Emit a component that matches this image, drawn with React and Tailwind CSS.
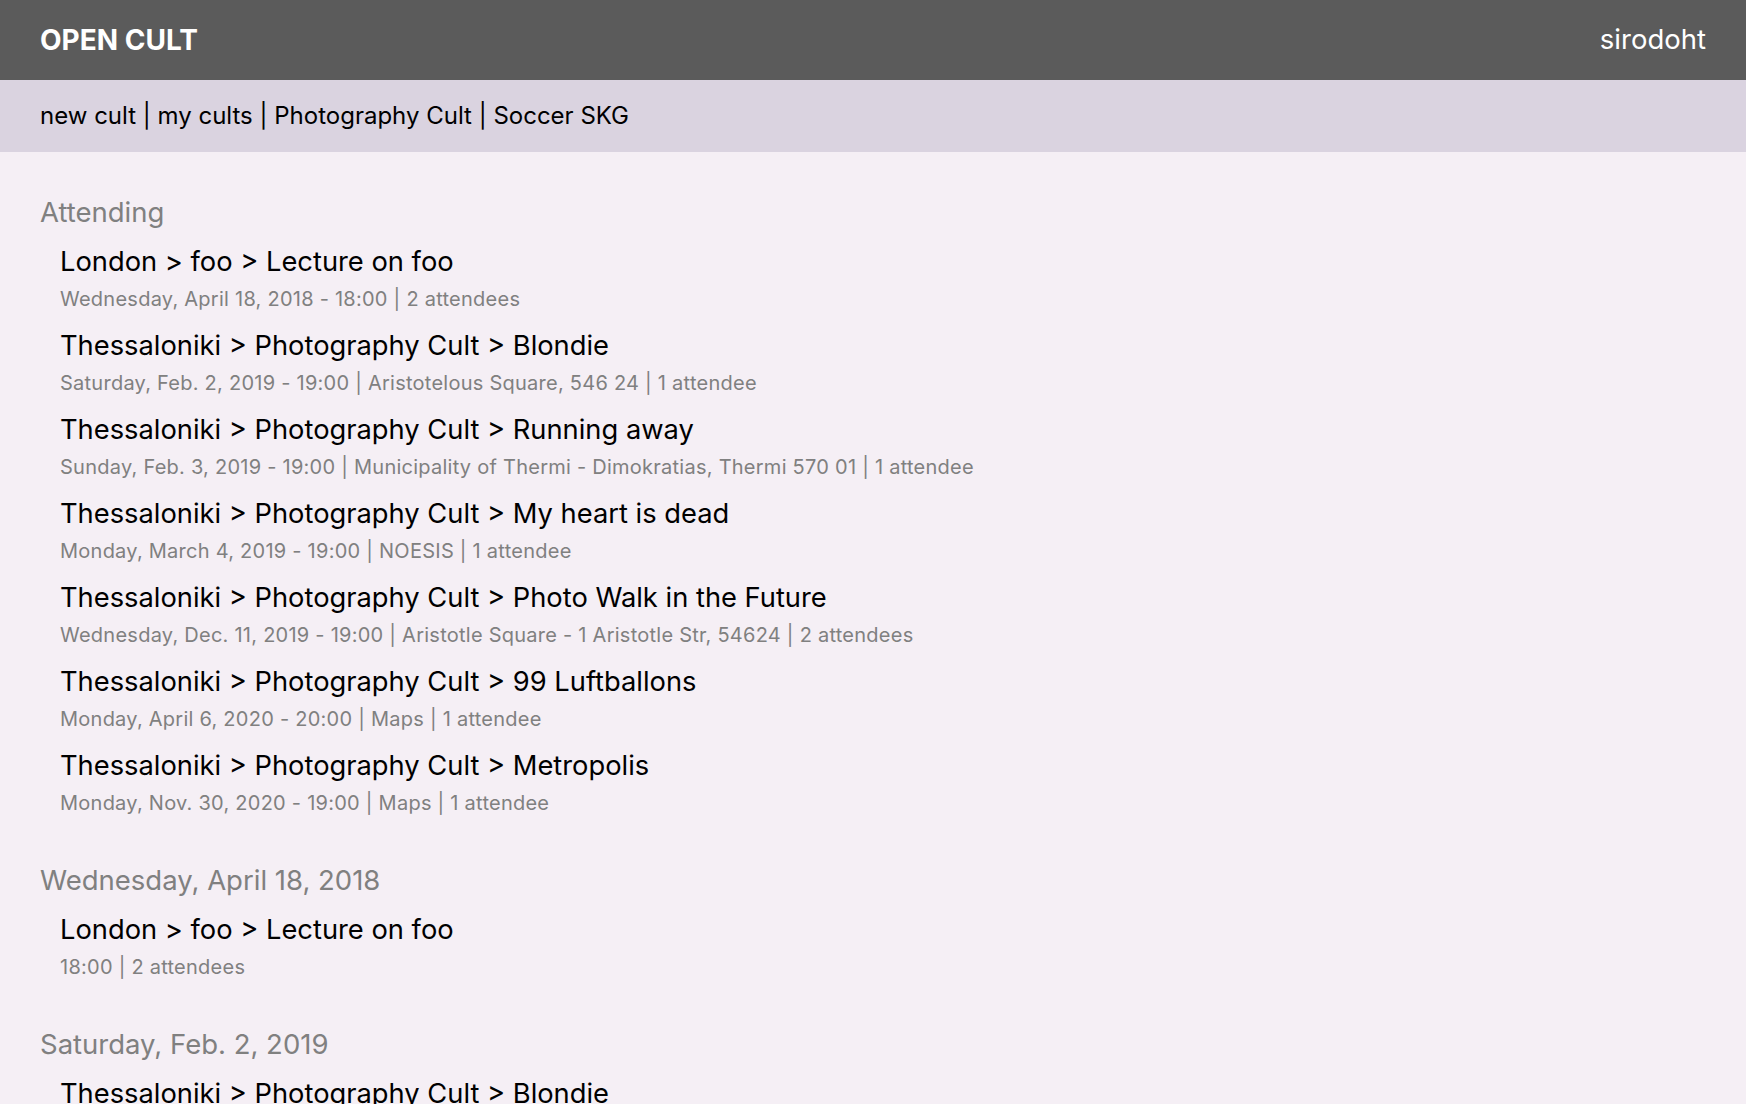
import React from "react";

const attending = [
  ["London > foo > Lecture on foo", "Wednesday, April 18, 2018 - 18:00 | 2 attendees"],
  ["Thessaloniki > Photography Cult > Blondie", "Saturday, Feb. 2, 2019 - 19:00 | Aristotelous Square, 546 24 | 1 attendee"],
  ["Thessaloniki > Photography Cult > Running away", "Sunday, Feb. 3, 2019 - 19:00 | Municipality of Thermi - Dimokratias, Thermi 570 01 | 1 attendee"],
  ["Thessaloniki > Photography Cult > My heart is dead", "Monday, March 4, 2019 - 19:00 | NOESIS | 1 attendee"],
  ["Thessaloniki > Photography Cult > Photo Walk in the Future", "Wednesday, Dec. 11, 2019 - 19:00 | Aristotle Square - 1 Aristotle Str, 54624 | 2 attendees"],
  ["Thessaloniki > Photography Cult > 99 Luftballons", "Monday, April 6, 2020 - 20:00 | Maps | 1 attendee"],
  ["Thessaloniki > Photography Cult > Metropolis", "Monday, Nov. 30, 2020 - 19:00 | Maps | 1 attendee"],
];

const byDate = [
  ["Wednesday, April 18, 2018", [["London > foo > Lecture on foo", "18:00 | 2 attendees"]]],
  ["Saturday, Feb. 2, 2019", [["Thessaloniki > Photography Cult > Blondie", "19:00 | Aristotelous Square, 546 24 | 1 attendee"]]],
  ["Sunday, Feb. 3, 2019", [["Thessaloniki > Photography Cult > Running away", "19:00 | Municipality of Thermi - Dimokratias, Thermi 570 01 | 1 attendee"]]],
];

function Section({ title, items }) {
  return (
    <section className="mb-[45px]">
      <h2 className="text-[27.5px] leading-[36px] text-[#808080] font-normal mb-[12px]">{title}</h2>
      <ul className="pl-[20px] flex flex-col gap-[13px]">
        {items.map(([t, m], i) => (
          <li key={i}>
            <div className="text-[27.3px] leading-[40px] text-black">{t}</div>
            <div className="mt-[3px] text-[20px] leading-[28px] tracking-[0.25px] text-[#808080]">{m}</div>
          </li>
        ))}
      </ul>
    </section>
  );
}

export default function App() {
  return (
    <div className="min-h-screen bg-[#f5eff5]" style={{ fontFamily: "Inter, 'Noto Sans', sans-serif" }}>
      <header className="h-[80px] bg-[#5b5b5b] px-[40px] flex items-center justify-between text-white">
        <div className="text-[28px] font-bold">OPEN CULT</div>
        <div className="text-[27.5px]">sirodoht</div>
      </header>
      <nav className="h-[72px] bg-[#dad3e0] px-[40px] flex items-center text-[24px] text-black">
        new cult | my cults | Photography Cult | Soccer SKG
      </nav>
      <main className="px-[40px] pt-[42px]">
        <Section title="Attending" items={attending} />
        {byDate.map(([d, items]) => (
          <Section key={d} title={d} items={items} />
        ))}
      </main>
    </div>
  );
}
